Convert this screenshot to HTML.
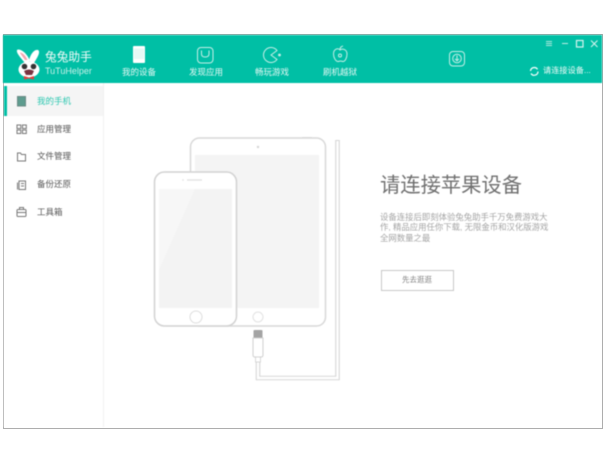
<!DOCTYPE html>
<html lang="zh">
<head>
<meta charset="utf-8">
<title>兔兔助手</title>
<style>
html,body{margin:0;padding:0;background:#fff;width:604px;height:458px;overflow:hidden}
body{position:relative;font-family:"Liberation Sans","Noto Sans CJK SC",sans-serif}
#win{position:absolute;left:3px;top:34px;width:598px;height:393px;border:1px solid #adadad;border-top-color:#a8a8a8;background:#fff;filter:blur(.3px)}
.t{position:absolute;white-space:nowrap;line-height:1}
.nav{color:#e4f8f4;font-size:8.500px;top:68px;width:60px;text-align:center}
.side{font-size:8.500px;color:#555;left:37px}
svg{position:absolute;overflow:visible}
</style>
</head>
<body>
<div id="win"></div>
<div style="position:absolute;left:0;top:0;width:604px;height:458px;filter:blur(.5px)">
<div style="position:absolute;left:3px;top:35px;width:599px;height:48px;background:#00bfa5"></div>

<!-- sidebar -->
<div style="position:absolute;left:4px;top:83px;width:100px;height:344px;background:#fff;border-right:1px solid #f1f1f1;box-sizing:border-box"></div>
<div style="position:absolute;left:4px;top:86px;width:99px;height:30px;background:#f5f5f5"></div>
<div style="position:absolute;left:4px;top:86px;width:2.500px;height:30px;background:#00bfa5"></div>

<!-- logo -->
<svg style="left:0;top:0" width="604" height="458" viewBox="0 0 604 458">
<path d="M25 63C21 58 16 53 17 50C20 48 27 53 30 61Z" fill="#fff"/>
<path d="M29 61C30 55 34 49 38 50C41 52 37 58 34 63Z" fill="#fff"/>
<path d="M25 60C22 56 20 53 20 52.500C22 52.500 25.500 55 27.500 60Z" fill="#f5a5b0"/>
<ellipse cx="29" cy="69.500" rx="10.500" ry="8" fill="#fff"/>
<circle cx="24.500" cy="66.500" r="2.800" fill="#333"/>
<circle cx="33.500" cy="66.500" r="2.800" fill="#333"/>
<path d="M24 71Q29 68 34 71L32 75H26Z" fill="#7a3340"/>
<path d="M24 76L29 77.500L34 76V79.500L29 78.500L24 79.500Z" fill="#e2403f"/>
</svg>
<div class="t" style="left:45px;top:52px;font-size:11.700px;color:#f2fcfa">兔兔助手</div>
<div class="t" style="left:45px;top:66.500px;font-size:9px;color:#c8f0e9">TuTuHelper</div>

<!-- nav icons -->
<svg style="left:0;top:0" width="604" height="458" viewBox="0 0 604 458" fill="none" stroke="#c6efe8" stroke-width="1">
<!-- device -->
<rect x="133" y="46" width="12" height="17" rx="1" fill="#fff" stroke="none"/>
<rect x="134" y="48.500" width="10" height="10.500" fill="#e6f9f5" stroke="none"/>
<!-- discover -->
<rect x="197.500" y="47.500" width="15.500" height="15.500" rx="3.500"/>
<path d="M201.500 50.500V54Q201.500 57 205.200 57Q209 57 209 54V50.500"/>
<!-- game -->
<path d="M277 50.500A7.500 7.500 0 1 0 277 59.500L271 55Z"/>
<circle cx="279.500" cy="55" r="1.400" fill="#c6efe8" stroke="none"/>
<!-- apple -->
<path d="M340 50C338 47.500 333.500 49 333.500 54C333.500 58 336 61.500 338 61.500C339 61.500 339.500 61 340.500 61C341.500 61 342 61.500 343 61.500C345 61.500 347 58 347 54C347 49.500 342.500 48 340 50Z"/>
<path d="M340 49.500C340 47.500 341 46.500 343 46"/>
<circle cx="340" cy="55.500" r="1.500"/>
<!-- download -->
<rect x="449.500" y="51.500" width="15" height="14.500" rx="3.500"/>
<circle cx="457" cy="58.500" r="4.300"/>
<path d="M457 55.500V60.500M455 58.800L457 60.800L459 58.800"/>
<!-- window controls -->
<path d="M546 41.500H552M546 43.500H552M546 45.500H552" stroke="#a9e7dc"/>
<path d="M562 43.500H568" stroke="#bfeee6"/>
<rect x="576.500" y="40.500" width="6.500" height="6.500" stroke="#d8f5f0" stroke-width="1.200"/>
<path d="M591 40.500L597.500 47M597.500 40.500L591 47" stroke="#d8f5f0"/>
<!-- refresh -->
<path d="M530.500 71A3.800 3.800 0 0 1 537.500 69.300M538 71.500A3.800 3.800 0 0 1 531 73.500" stroke="#fff" stroke-width="1.200"/>
</svg>
<div class="t nav" style="left:109px">我的设备</div>
<div class="t nav" style="left:176px">发现应用</div>
<div class="t nav" style="left:242px">畅玩游戏</div>
<div class="t nav" style="left:310px">刷机越狱</div>
<div class="t" style="left:543px;top:67px;font-size:8.200px;color:#eefbf8">请连接设备...</div>

<!-- side items -->
<div class="t side" style="top:97px;color:#2cc7b0">我的手机</div>
<div class="t side" style="top:124.500px">应用管理</div>
<div class="t side" style="top:152px">文件管理</div>
<div class="t side" style="top:180px">备份还原</div>
<div class="t side" style="top:208px">工具箱</div>
<svg style="left:0;top:0" width="604" height="458" viewBox="0 0 604 458" fill="none" stroke="#777" stroke-width="1">
<rect x="17.500" y="96.500" width="8" height="9.500" fill="#5e9c8f" stroke="#6a8a84"/>
<rect x="17" y="125" width="3.800" height="3.500"/><rect x="22.500" y="125" width="3.800" height="3.500"/>
<rect x="17" y="130" width="3.800" height="3.500"/><rect x="22.500" y="130" width="3.800" height="3.500"/>
<path d="M17.500 153V161H25.500V154.500H21.500L20.500 153Z"/>
<rect x="19" y="181" width="6.500" height="8.500"/><path d="M17.500 182.500V189.500"/><path d="M21 183.500H24M21 186H24"/>
<rect x="17" y="209.500" width="9" height="7" rx="1"/><path d="M19.500 209.500V207.500H23.500V209.500M17 212.500H26"/>
</svg>

<!-- illustration -->
<svg style="left:0;top:0" width="604" height="458" viewBox="0 0 604 458" fill="none">
<rect x="190.500" y="138" width="135" height="188" rx="9" fill="#fff" stroke="#d8d8d8" stroke-width="1.500"/>
<rect x="195" y="155" width="124" height="153" fill="#f4f4f4"/>
<path d="M302 137.500H312" stroke="#d8d8d8"/>
<circle cx="258" cy="147" r="1.200" fill="#d5d5d5"/>
<circle cx="258" cy="317" r="5" stroke="#e2e2e2"/>
<rect x="154.500" y="172" width="82" height="154" rx="10" fill="#fff" stroke="#d2d2d2" stroke-width="1.500"/>
<rect x="159" y="189" width="73" height="119" fill="#f3f3f3"/>
<path d="M159 189H195L159 270Z" fill="#f7f7f7"/>
<path d="M187 180H202" stroke="#dedede" stroke-width="1.200"/>
<circle cx="183" cy="180" r=".8" fill="#ddd"/>
<circle cx="196" cy="317" r="6" stroke="#dedede"/>
<path d="M337.500 140V378H258V360" stroke="#d6d6d6" stroke-width="4.600"/>
<path d="M337.500 141V378H258V360" stroke="#fff" stroke-width="2.400"/>
<rect x="253.500" y="330" width="9" height="9" rx="1" fill="#a4a4a4"/>
<path d="M253 338H263V355Q263 357 261 357H255Q253 357 253 355Z" fill="#fff" stroke="#d0d0d0"/>
<rect x="255.500" y="357" width="5" height="5" fill="#fff" stroke="#d0d0d0" stroke-width=".8"/>
</svg>

<!-- content -->
<div class="t" style="left:380px;top:175.500px;font-size:20.300px;color:#6f6f6f">请连接苹果设备</div>
<div class="t" style="left:380px;top:212.500px;font-size:8.400px;color:#a4a4a4">设备连接后即刻体验兔兔助手千万免费游戏大</div>
<div class="t" style="left:380px;top:223px;font-size:8.400px;color:#a4a4a4">作, 精品应用任你下载, 无限金币和汉化版游戏</div>
<div class="t" style="left:380px;top:234px;font-size:8.400px;color:#a4a4a4">全网数量之最</div>
<div style="position:absolute;left:381px;top:270px;width:71px;height:19px;border:1px solid #c8c8c8;background:#fff"></div>
<div class="t" style="left:402px;top:276px;font-size:7.500px;color:#808080">先去逛逛</div>
</div>
</body>
</html>
